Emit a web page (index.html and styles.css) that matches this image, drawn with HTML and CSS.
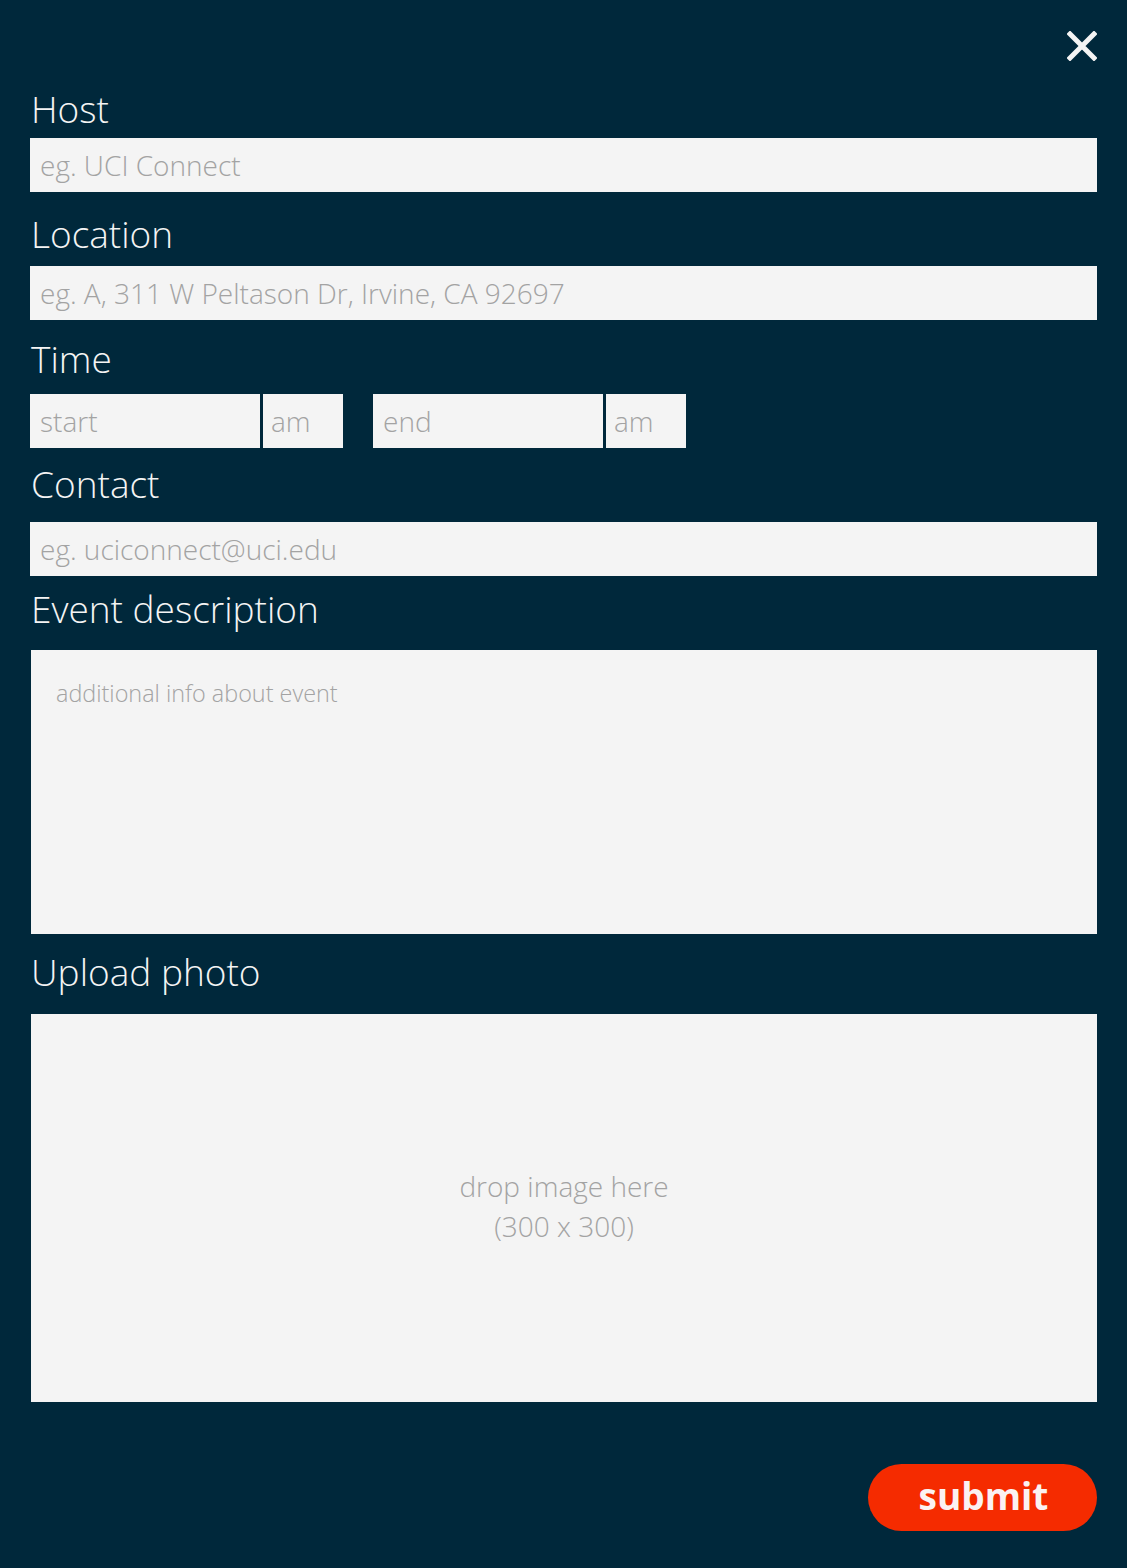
FILE: index.html
```html
<!DOCTYPE html>
<html lang="en">

<head>
  <meta charset="UTF-8" />
  <meta name="viewport" content="width=device-width, initial-scale=1.0" />
  <title>New Event</title>
  <link rel="stylesheet" href="styles.css">
</head>

<body>
  <form class="event-form">
    <div class="top-bar">
      <button type="button" class="close-btn" aria-label="close">
        <svg width="30" height="30" viewBox="0 0 30 30">
          <path d="M3 3 L27 27 M27 3 L3 27" stroke="#f4f4f4" stroke-width="5" stroke-linecap="square" fill="none" />
        </svg>
      </button>
    </div>

    <label class="field-label" for="host">Host</label>
    <input id="host" class="field" type="text" placeholder="eg. UCI Connect">

    <label class="field-label lbl-2" for="location">Location</label>
    <input id="location" class="field" type="text" placeholder="eg. A, 311 W Peltason Dr, Irvine, CA 92697">

    <label class="field-label lbl-3" for="start">Time</label>
    <div class="time-row">
      <input id="start" class="field time-input" type="text" placeholder="start">
      <input class="field ampm" type="text" placeholder="am">
      <input class="field time-input end" type="text" placeholder="end">
      <input class="field ampm" type="text" placeholder="am">
    </div>

    <label class="field-label lbl-4" for="contact">Contact</label>
    <input id="contact" class="field" type="text" placeholder="eg. uciconnect@uci.edu">

    <label class="field-label lbl-5" for="desc">Event description</label>
    <textarea id="desc" class="description" placeholder="additional info about event"></textarea>

    <label class="field-label upload-label">Upload photo</label>
    <div class="dropzone">drop image here<br>(300 x 300)</div>

    <div class="actions">
      <button type="submit" class="submit-btn">submit</button>
    </div>
  </form>
</body>

</html>
```

FILE: styles.css
```css
* {
  box-sizing: border-box;
}

body {
  margin: 0;
  background: #00283b;
  font-family: "Open Sans", "Noto Sans", sans-serif;
  font-weight: 300;
  color: #f4f4f4;
}

.event-form {
  display: flex;
  flex-direction: column;
  padding: 0 30px 0 30px;
  min-height: 1568px;
}

.top-bar {
  height: 64px;
  display: flex;
  justify-content: flex-end;
  align-items: flex-start;
  padding-top: 31px;
}

.close-btn {
  background: none;
  border: none;
  padding: 0;
  width: 30px;
  height: 30px;
  cursor: pointer;
}

.close-btn svg {
  display: block;
}

/* Section titles */
.field-label {
  height: 74px;
  display: flex;
  align-items: flex-end;
  font-size: 37px;
  line-height: 1;
  padding-bottom: 11px;
  padding-left: 1px;
}

/* titles sit a little higher the further down the form they are */
.lbl-2 {
  padding-bottom: 14px;
}

.lbl-3 {
  padding-bottom: 17px;
}

.lbl-4 {
  padding-bottom: 20px;
}

.lbl-5 {
  padding-bottom: 23px;
}

.upload-label {
  height: 80px;
  padding-bottom: 24px;
}

/* Inputs */
.field {
  height: 54px;
  border: none;
  outline: none;
  background: #f4f4f4;
  font-family: inherit;
  font-weight: 300;
  font-size: 28px;
  color: #333;
  padding: 0 10px;
}

.field::placeholder,
.description::placeholder {
  color: #a3a3a3;
}

.time-row {
  display: flex;
  gap: 3px;
}

.time-input {
  width: 230px;
}

.ampm {
  width: 80px;
  padding: 0 8px;
}

.time-row .end {
  margin-left: 27px;
}

.description {
  height: 284px;
  margin-left: 1px;
  border: none;
  outline: none;
  resize: none;
  background: #f4f4f4;
  font-family: inherit;
  font-weight: 300;
  font-size: 23.4px;
  padding: 27px 25px;
}

.dropzone {
  height: 388px;
  margin-left: 1px;
  background: #f4f4f4;
  color: #a3a3a3;
  font-size: 28px;
  line-height: 40px;
  display: flex;
  align-items: center;
  justify-content: center;
  text-align: center;
  padding-bottom: 4px;
}

.actions {
  display: flex;
  justify-content: flex-end;
  padding-top: 62px;
}

.submit-btn {
  width: 229px;
  height: 67px;
  border: none;
  border-radius: 34px;
  background: #f52b00;
  color: #fbf2f2;
  font-family: "Open Sans", sans-serif;
  font-weight: 700;
  font-size: 37px;
  padding: 0 0 4px 2px;
  cursor: pointer;
}
```
